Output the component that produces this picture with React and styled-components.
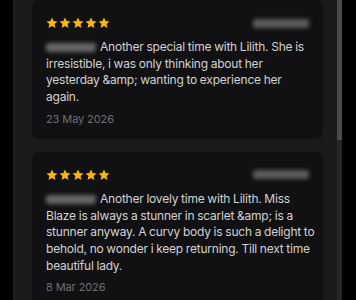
import React from 'react';
import styled, { createGlobalStyle } from 'styled-components';

const GlobalStyle = createGlobalStyle`
  html, body {
    margin: 0;
    padding: 0;
    background: #000;
    height: 300px;
    overflow: hidden;
  }
  body {
    font-family: Inter, "Noto Sans", sans-serif;
  }
`;

const Page = styled.div`
  display: flex;
  height: 300px;
  padding-left: 13px;
  overflow: hidden;
`;

const Panel = styled.div`
  box-sizing: border-box;
  width: 324px;
  flex-shrink: 0;
  height: 300px;
  background: #1b1b1d;
  border-left: 1px solid #232325;
  padding: 0 14px 0 18px;
  display: flex;
  flex-direction: column;
  gap: 13px;
  overflow: hidden;
`;

const Track = styled.div`
  width: 5px;
  flex-shrink: 0;
  height: 300px;
  background: #262628;
  display: flex;
  flex-direction: column;
`;

const Thumb = styled.div`
  height: 140px;
  background: #4a4a4c;
`;

const Card = styled.div`
  flex-shrink: 0;
  background: #111113;
  border-radius: 7px;
  padding: 17px 4px 13px 14px;
  display: flex;
  flex-direction: column;
`;

const Head = styled.div`
  display: flex;
  justify-content: space-between;
  align-items: center;
  height: 12px;
  padding-right: 10px;
`;

const Stars = styled.div`
  display: flex;
  gap: 1px;
`;

const Blur = styled.span`
  display: inline-block;
  vertical-align: middle;
  width: ${(p) => p.$w}px;
  height: 9px;
  background: #7c7c7e;
  border-radius: 3px;
  filter: blur(2px);
  opacity: ${(p) => p.$o || 0.8};
  margin-right: ${(p) => p.$mr || 0}px;
`;

const Body = styled.p`
  margin: 10px 0 0 0;
  font-size: 12px;
  letter-spacing: -0.22px;
  word-spacing: -0.3px;
  line-height: 16.7px;
  color: #d2d2d2;
  width: 270px;
`;

const DateText = styled.div`
  margin-top: 6px;
  font-size: 11px;
  line-height: 14px;
  letter-spacing: -0.1px;
  color: #6e6e70;
`;

const Star = () => (
  <svg width="12" height="12" viewBox="0 0 24 24">
    <path
      fill="#f6b60b"
      d="M12 1l3.3 7.1 7.7.8-5.8 5.2 1.7 7.7L12 17.8l-6.9 4 1.7-7.7L1 8.9l7.7-.8z"
    />
  </svg>
);

const reviews = [
  {
    text: 'Another special time with Lilith. She is irresistible, i was only thinking about her yesterday &amp; wanting to experience her again.',
    date: '23 May 2026',
  },
  {
    text: 'Another lovely time with Lilith. Miss Blaze is always a stunner in scarlet &amp; is a stunner anyway. A curvy body is such a delight to behold, no wonder i keep returning. Till next time beautiful lady.',
    date: '8 Mar 2026',
  },
];

const Review = ({ text, date }) => (
  <Card>
    <Head>
      <Stars>
        {[0, 1, 2, 3, 4].map((i) => (
          <Star key={i} />
        ))}
      </Stars>
      <Blur $w={56} $o={0.7} />
    </Head>
    <Body>
      <Blur $w={50} $mr={4} />
      {text}
    </Body>
    <DateText>{date}</DateText>
  </Card>
);

export default function App() {
  return (
    <>
      <GlobalStyle />
      <Page>
        <Panel>
          {reviews.map((r) => (
            <Review key={r.date} {...r} />
          ))}
        </Panel>
        <Track>
          <Thumb />
        </Track>
      </Page>
    </>
  );
}
